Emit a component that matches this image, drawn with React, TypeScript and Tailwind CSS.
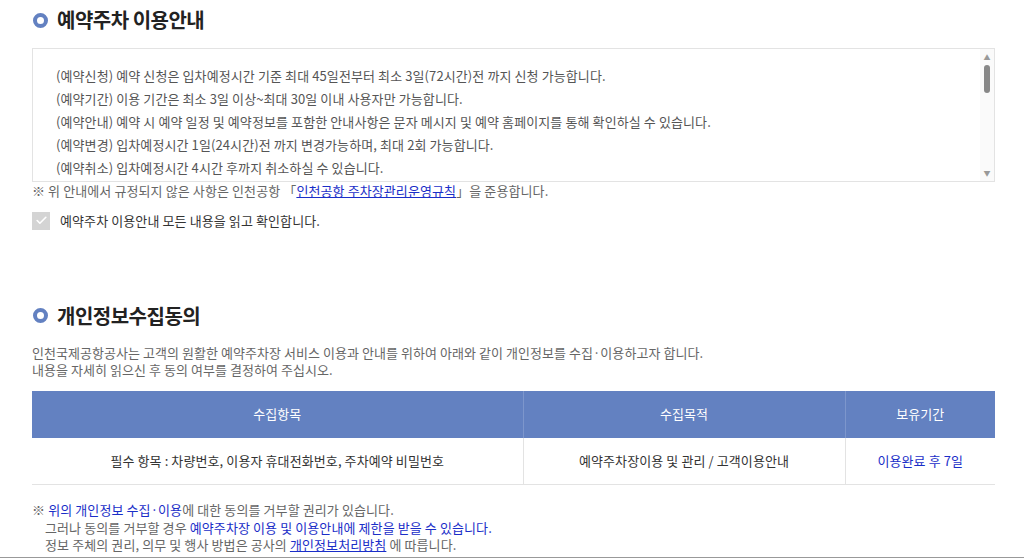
import { Check } from 'lucide-react';

const guideLines = [
    '(예약신청) 예약 신청은 입차예정시간 기준 최대 45일전부터 최소 3일(72시간)전 까지 신청 가능합니다.',
    '(예약기간) 이용 기간은 최소 3일 이상~최대 30일 이내 사용자만 가능합니다.',
    '(예약안내) 예약 시 예약 일정 및 예약정보를 포함한 안내사항은 문자 메시지 및 예약 홈페이지를 통해 확인하실 수 있습니다.',
    '(예약변경) 입차예정시간 1일(24시간)전 까지 변경가능하며, 최대 2회 가능합니다.',
    '(예약취소) 입차예정시간 4시간 후까지 취소하실 수 있습니다.',
    '(예약결제) 예약 요금은 출차 시 정산하시면 됩니다.',
];

function SectionTitle({ title }: { title: string }) {
    return (
        <div className="flex items-center h-[40px]">
            <span className="w-[15px] h-[15px] rounded-full border-[4px] border-[#6381c1] mr-[9px] ml-[1px]" />
            <h2 className="text-[20px] font-bold text-[#222] tracking-[-0.5px]">{title}</h2>
        </div>
    );
}

export default function App() {
    return (
        <div
            className="bg-white w-[1024px] h-[558px] overflow-hidden"
            style={{ fontFamily: '"Noto Sans CJK KR", "Noto Sans", sans-serif' }}
        >
            <div className="pl-[32px] w-[995px]">
                <SectionTitle title="예약주차 이용안내" />

                <div className="mt-[8px] h-[134px] border border-[#e3e3e3] flex">
                    <div className="flex-1 overflow-hidden pt-[15px] pl-[23px] text-[13px] leading-[23px] text-[#555] tracking-[0.1px]">
                        {guideLines.map((line) => (
                            <p key={line}>{line}</p>
                        ))}
                    </div>
                    <div className="w-[14px] flex flex-col items-center pt-[4px] pb-[4px] bg-[#fafafa]">
                        <span className="text-[7px] leading-[8px] text-[#999]">▲</span>
                        <span className="mt-[4px] w-[6px] h-[28px] rounded-full bg-[#888]" />
                        <span className="flex-1" />
                        <span className="text-[7px] leading-[8px] text-[#999]">▼</span>
                    </div>
                </div>

                <p className="text-[13px] leading-[18px] text-[#666] tracking-[0.1px] whitespace-nowrap">
                    ※ 위 안내에서 규정되지 않은 사항은 인천공항 「<a className="text-[#1a2ec8] underline">인천공항 주차장관리운영규칙</a>」을 준용합니다.
                </p>

                <label className="mt-[11px] flex items-center">
                    <span className="w-[18px] h-[18px] bg-[#d4d4d4] flex items-center justify-center">
                        <Check className="w-[13px] h-[13px] text-white" strokeWidth={3} />
                    </span>
                    <span className="ml-[10px] text-[13px] text-[#333] tracking-[0.1px]">
                        예약주차 이용안내 모든 내용을 읽고 확인합니다.
                    </span>
                </label>

                <div className="mt-[65px]">
                    <SectionTitle title="개인정보수집동의" />
                </div>

                <div className="mt-[8px] text-[13px] leading-[17px] text-[#666] tracking-[0.05px]">
                    <p>인천국제공항공사는 고객의 원활한 예약주차장 서비스 이용과 안내를 위하여 아래와 같이 개인정보를 수집·이용하고자 합니다.</p>
                    <p>내용을 자세히 읽으신 후 동의 여부를 결정하여 주십시오.</p>
                </div>

                <table className="mt-[13px] w-full border-collapse text-[13px] tracking-[0.1px]">
                    <thead>
                        <tr className="bg-[#6381c1] text-white h-[47px]">
                            <th className="font-normal w-[491px] border-r border-[#7d96cc]">수집항목</th>
                            <th className="font-normal w-[322px] border-r border-[#7d96cc]">수집목적</th>
                            <th className="font-normal">보유기간</th>
                        </tr>
                    </thead>
                    <tbody>
                        <tr className="h-[47px] border-b border-[#e3e3e3] text-[#333]">
                            <td className="text-center border-r border-[#e3e3e3]">필수 항목 : 차량번호, 이용자 휴대전화번호, 주차예약 비밀번호</td>
                            <td className="text-center border-r border-[#e3e3e3]">예약주차장이용 및 관리 / 고객이용안내</td>
                            <td className="text-center text-[#1a2ec8]">이용완료 후 7일</td>
                        </tr>
                    </tbody>
                </table>

                <div className="mt-[16px] text-[13px] leading-[17.5px] text-[#666] tracking-[0.1px]">
                    <p>
                        ※ <span className="text-[#1a2ec8]">위의 개인정보 수집·이용</span>에 대한 동의를 거부할 권리가 있습니다.
                    </p>
                    <p className="pl-[13px]">
                        그러나 동의를 거부할 경우 <span className="text-[#1a2ec8]">예약주차장 이용 및 이용안내에 제한을 받을 수 있습니다.</span>
                    </p>
                    <p className="pl-[13px]">
                        정보 주체의 권리, 의무 및 행사 방법은 공사의 <a className="text-[#1a2ec8] underline">개인정보처리방침</a> 에 따릅니다.
                    </p>
                </div>
            </div>
            <div className="mt-[3px] h-[2px] bg-[#999]" />
        </div>
    );
}
